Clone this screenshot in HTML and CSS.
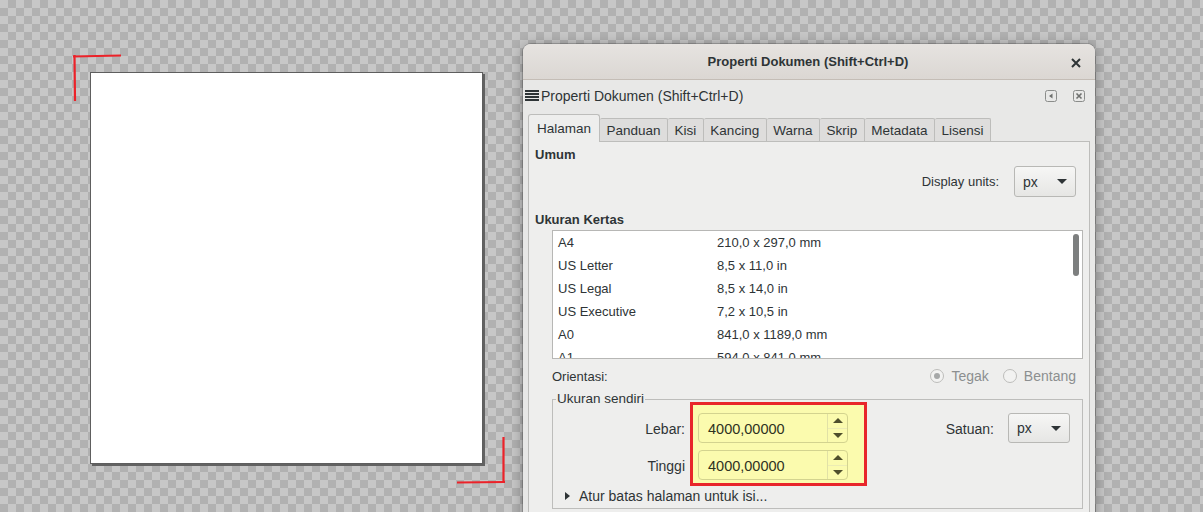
FILE: index.html
```html
<!DOCTYPE html>
<html lang="id">
<head>
<meta charset="utf-8">
<title>Properti Dokumen</title>
<link rel="stylesheet" href="styles.css">
</head>
<body>
<div class="desk">
  <div class="page"></div>
  <svg class="marks" width="520" height="512" viewBox="0 0 520 512">
    <path d="M73 56.5 L121 55.5 M74.5 55 L75 101" stroke="#ec2229" stroke-width="2.2" fill="none"/>
    <path d="M503.5 437 L503.5 482 M457 482.5 L505 482" stroke="#ec2229" stroke-width="2.2" fill="none"/>
  </svg>

  <div class="win">
    <header class="titlebar">
      <span class="title">Properti Dokumen (Shift+Ctrl+D)</span>
      <svg class="close" width="10" height="10" viewBox="0 0 10 10"><path d="M1 1 L9 9 M9 1 L1 9" stroke="#2e3436" stroke-width="2"/></svg>
    </header>
    <div class="winbody">
      <div class="dockbar">
        <svg class="hamb" width="14" height="12" viewBox="0 0 14 12"><path d="M0 1h14M0 4h14M0 7h14M0 10h14" stroke="#2e3436" stroke-width="2"/></svg>
        <span class="docktitle">Properti Dokumen (Shift+Ctrl+D)</span>
        <span class="dockicons">
          <svg width="12" height="12" viewBox="0 0 12 12"><rect x="0.5" y="0.5" width="11" height="11" rx="2" fill="none" stroke="#8a8c8a"/><path d="M7.5 3.5 L4 6 L7.5 8.5 Z" fill="#6e706e"/></svg>
          <svg width="12" height="12" viewBox="0 0 12 12"><rect x="0.5" y="0.5" width="11" height="11" rx="2" fill="none" stroke="#8a8c8a"/><path d="M3.5 3.5 L8.5 8.5 M8.5 3.5 L3.5 8.5" stroke="#6e706e" stroke-width="1.6"/></svg>
        </span>
      </div>

      <div class="notebook">
        <div class="tabs">
          <span class="tab active">Halaman</span>
          <span class="tab">Panduan</span>
          <span class="tab">Kisi</span>
          <span class="tab">Kancing</span>
          <span class="tab">Warna</span>
          <span class="tab">Skrip</span>
          <span class="tab">Metadata</span>
          <span class="tab">Lisensi</span>
        </div>
        <div class="pane">
          <div class="sect">Umum</div>
          <div class="units-row">
            <span>Display units:</span>
            <span class="combo combo-units"><span>px</span><i class="caret"></i></span>
          </div>
          <div class="sect sect-paper">Ukuran Kertas</div>
          <div class="list">
            <div class="lrow"><span class="c1">A4</span><span>210,0 x 297,0 mm</span></div>
            <div class="lrow"><span class="c1">US Letter</span><span>8,5 x 11,0 in</span></div>
            <div class="lrow"><span class="c1">US Legal</span><span>8,5 x 14,0 in</span></div>
            <div class="lrow"><span class="c1">US Executive</span><span>7,2 x 10,5 in</span></div>
            <div class="lrow"><span class="c1">A0</span><span>841,0 x 1189,0 mm</span></div>
            <div class="lrow"><span class="c1">A1</span><span>594,0 x 841,0 mm</span></div>
            <div class="scroll-thumb"></div>
          </div>
          <div class="orient-row">
            <span>Orientasi:</span>
            <span class="radios">
              <span class="radio checked"></span><span class="rlabel">Tegak</span>
              <span class="radio rsecond"></span><span class="rlabel">Bentang</span>
            </span>
          </div>
          <fieldset class="frame">
            <legend>Ukuran sendiri</legend>
            <div class="frame-grid">
              <div class="labels">
                <span>Lebar:</span>
                <span>Tinggi</span>
              </div>
              <div class="highlight">
                <div class="spin"><span class="val">4000,00000</span><span class="spinbtns"><i class="up"></i><i class="down"></i></span></div>
                <div class="spin"><span class="val">4000,00000</span><span class="spinbtns"><i class="up"></i><i class="down"></i></span></div>
              </div>
              <div class="satuan">
                <span>Satuan:</span>
                <span class="combo combo-sat"><span>px</span><i class="caret"></i></span>
              </div>
            </div>
            <div class="expander"><i class="tri"></i><span>Atur batas halaman untuk isi...</span></div>
          </fieldset>
        </div>
      </div>
    </div>
  </div>
</div>
</body>
</html>
```

FILE: styles.css
```css
html, body {
  margin: 0;
  padding: 0;
}
body {
  width: 1203px;
  height: 512px;
  overflow: hidden;
  font-family: "Liberation Sans", Arial, sans-serif;
  font-size: 13px;
  color: #2e3436;
}
.desk {
  position: relative;
  width: 1203px;
  height: 512px;
  background-color: #c7c7c7;
  background-image: conic-gradient(#b1b1b1 25%, transparent 0 50%, #b1b1b1 0 75%, transparent 0);
  background-size: 16px 16px;
}
.page {
  position: absolute;
  left: 90px;
  top: 72px;
  width: 391px;
  height: 390px;
  background: #fff;
  border: 1px solid #5e5e5e;
  box-shadow: 2px 2px 0 #626262;
}
.marks {
  position: absolute;
  left: 0;
  top: 0;
}
.win {
  position: absolute;
  left: 523px;
  top: 44px;
  width: 572px;
  height: 520px;
  background: #e8e8e7;
  border-radius: 8px 8px 0 0;
  box-shadow: 0 0 0 1px rgba(0,0,0,0.18), 0 2px 14px rgba(0,0,0,0.35);
  overflow: hidden;
}
.titlebar {
  position: relative;
  height: 36px;
  display: flex;
  align-items: center;
  justify-content: center;
  background: linear-gradient(#e6e3e0, #dbd7d3);
  border-bottom: 1px solid #c4bdb6;
  box-sizing: border-box;
}
.title {
  font-weight: bold;
  font-size: 13px;
  margin-right: 2px;
}
.close {
  position: absolute;
  right: 14px;
  top: 14px;
}
.winbody {
  padding: 4px 5px 0 5px;
}
.dockbar {
  display: flex;
  align-items: center;
  height: 24px;
  margin-left: -3px;
}
.hamb {
  margin-right: 2px;
}
.docktitle {
  font-size: 14px;
}
.dockicons {
  margin-left: auto;
  display: flex;
  gap: 16px;
  margin-right: 5px;
}
.notebook {
  margin-top: 6px;
}
.tabs {
  display: flex;
  align-items: flex-end;
  height: 27px;
  position: relative;
  z-index: 1;
}
.tab {
  height: 23px;
  line-height: 23px;
  padding: 0 6.5px;
  font-size: 13.5px;
  background: #dedddc;
  border: 1px solid #bdbdbb;
  border-left: none;
  border-bottom: none;
  box-sizing: border-box;
  border-radius: 2px 2px 0 0;
}
.tab.active {
  height: 28px;
  line-height: 28px;
  padding: 0 8px;
  background: #eeeeed;
  border-left: 1px solid #bdbdbb;
  margin-bottom: -1px;
  border-radius: 3px 3px 0 0;
}
.pane {
  background: #eeeeed;
  border: 1px solid #bdbdbb;
  padding: 5px 6px 0 6px;
  height: 420px;
  box-sizing: border-box;
}
.sect {
  font-weight: bold;
  line-height: 16px;
}
.sect-paper {
  margin-top: 15px;
}
.units-row {
  display: flex;
  justify-content: flex-end;
  align-items: center;
  gap: 15px;
  margin-top: 3px;
  margin-right: 7px;
  height: 31px;
}
.combo {
  display: flex;
  align-items: center;
  box-sizing: border-box;
  border: 1px solid #b8b8b5;
  border-radius: 3px;
  background: linear-gradient(#f6f6f5, #e6e6e4);
  padding-left: 8px;
  font-size: 14px;
}
.combo-units {
  width: 62px;
  height: 31px;
}
.combo-sat {
  width: 62px;
  height: 30px;
}
.caret {
  margin-left: auto;
  margin-right: 8px;
  width: 0;
  height: 0;
  border-left: 5px solid transparent;
  border-right: 5px solid transparent;
  border-top: 5px solid #2e3436;
}
.list {
  position: relative;
  margin: 2px 0 0 17px;
  height: 129px;
  box-sizing: border-box;
  background: #fff;
  border: 1px solid #b7b7b5;
  overflow: hidden;
  padding-left: 5px;
}
.lrow {
  display: flex;
  height: 23px;
  line-height: 24px;
}
.c1 {
  width: 159px;
}
.scroll-thumb {
  position: absolute;
  right: 3px;
  top: 3px;
  width: 6px;
  height: 42px;
  border-radius: 3px;
  background: #7d7f7f;
}
.orient-row {
  display: flex;
  align-items: center;
  height: 20px;
  margin: 7px 7px 0 17px;
}
.radios {
  margin-left: auto;
  display: flex;
  align-items: center;
  color: #8c8f90;
  font-size: 14px;
}
.radio {
  width: 14px;
  height: 14px;
  box-sizing: border-box;
  border: 1px solid #bdbdbb;
  border-radius: 50%;
  background: #f2f2f1;
  margin-right: 7px;
  display: flex;
  align-items: center;
  justify-content: center;
}
.radio.checked::after {
  content: "";
  width: 6px;
  height: 6px;
  border-radius: 50%;
  background: #a6a8a8;
}
.rsecond {
  margin-left: 14px;
}
.frame {
  margin: 6px 0 0 17px;
  padding: 0 12px 4px 0;
  border: 1px solid #bdbdbb;
  min-width: 0;
}
.frame legend {
  margin-left: 3px;
  padding: 0 1px;
  line-height: 14px;
  font-size: 13.5px;
}
.frame-grid {
  display: flex;
  margin-top: -4px;
}
.labels {
  width: 132px;
  display: flex;
  flex-direction: column;
  align-items: flex-end;
  gap: 7px;
  padding-top: 11px;
  margin-right: 5px;
  font-size: 14px;
}
.labels span {
  height: 30px;
  line-height: 32px;
}
.highlight {
  display: flex;
  flex-direction: column;
  gap: 7px;
  border: 3px solid #e8262b;
  background: #fbfbae;
  padding: 8px 16px 3px 5px;
}
.spin {
  display: flex;
  width: 150px;
  height: 30px;
  box-sizing: border-box;
  border: 1px solid #d3d38f;
  border-radius: 4px;
  background: #fbfbae;
}
.val {
  flex: 1;
  padding-left: 9px;
  line-height: 30px;
  font-size: 14.5px;
  color: #2f321f;
}
.spinbtns {
  width: 19px;
  border-left: 1px solid #e1e1a6;
  display: flex;
  flex-direction: column;
  align-items: center;
}
.spinbtns .up, .spinbtns .down {
  flex: 1;
  width: 100%;
  display: flex;
  align-items: center;
  justify-content: center;
}
.spinbtns .up {
  border-bottom: 1px solid #ececb4;
}
.spinbtns .up::after {
  content: "";
  border-left: 5px solid transparent;
  border-right: 5px solid transparent;
  border-bottom: 5px solid #4f4f2c;
}
.spinbtns .down::after {
  content: "";
  border-left: 5px solid transparent;
  border-right: 5px solid transparent;
  border-top: 5px solid #4f4f2c;
}
.satuan {
  margin-left: auto;
  padding-top: 11px;
  display: flex;
  align-items: flex-start;
  gap: 14px;
  font-size: 14px;
}
.satuan > span:first-child {
  line-height: 32px;
}
.expander {
  display: flex;
  align-items: center;
  height: 16px;
  margin-top: 2px;
  padding-left: 12px;
  font-size: 14px;
}
.tri {
  width: 0;
  height: 0;
  border-top: 4.5px solid transparent;
  border-bottom: 4.5px solid transparent;
  border-left: 5px solid #2e3436;
  margin-right: 9px;
}
```
